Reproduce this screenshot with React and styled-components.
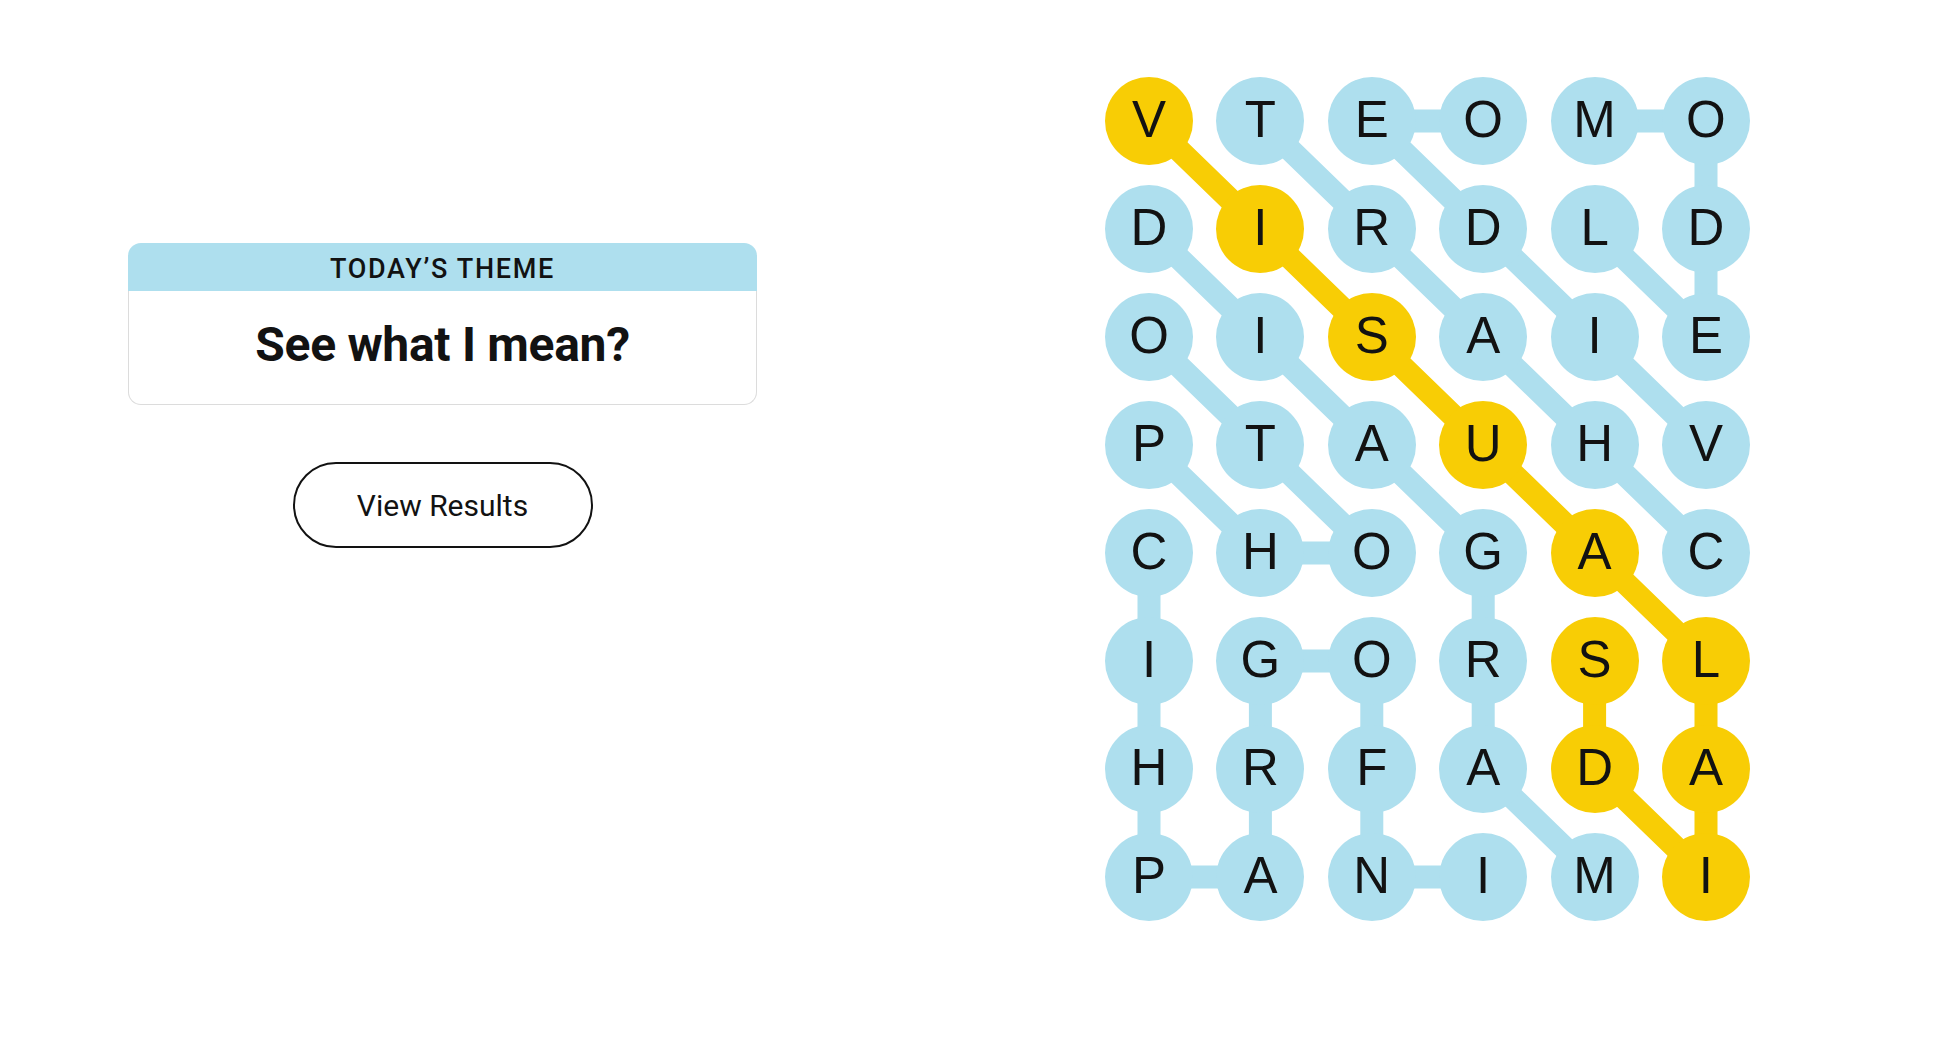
import React from 'react';
import styled, { createGlobalStyle } from 'styled-components';

const GlobalStyle = createGlobalStyle`
    body {
        margin: 0;
        background: #ffffff;
        font-family: "Liberation Sans", Arial, sans-serif;
        color: #121212;
    }
`;

const BLUE = '#aedfee';
const YELLOW = '#f8cd05';

const CIRCLE = 88;
const COL_GAP = 23.4;
const ROW_GAP = 20;
const STEP_X = CIRCLE + COL_GAP;
const STEP_Y = CIRCLE + ROW_GAP;

const letters = [
    'VTEOMO',
    'DIRDLD',
    'OISAIE',
    'PTAUHV',
    'CHOGAC',
    'IGORSL',
    'HRFADA',
    'PANIMI',
];

// spangram, in path order
const spangram = [[0, 0], [1, 1], [2, 2], [3, 3], [4, 4], [5, 5], [6, 5], [7, 5], [6, 4], [5, 4]];

const words = [
    // INFOGRAPHIC
    [[7, 3], [7, 2], [6, 2], [5, 2], [5, 1], [6, 1], [7, 1], [7, 0], [6, 0], [5, 0], [4, 0]],
    // PHOTO
    [[3, 0], [4, 1], [4, 2], [3, 1], [2, 0]],
    // DIAGRAM
    [[1, 0], [2, 1], [3, 2], [4, 3], [5, 3], [6, 3], [7, 4]],
    // VIDEO
    [[3, 5], [2, 4], [1, 3], [0, 2], [0, 3]],
    // CHART
    [[4, 5], [3, 4], [2, 3], [1, 2], [0, 1]],
    // MODEL
    [[0, 4], [0, 5], [1, 5], [2, 5], [1, 4]],
];

const isSpangram = (r, c) => spangram.some(([a, b]) => a === r && b === c);

const Page = styled.main`
    display: flex;
    align-items: flex-start;
    gap: 348px;
    padding: 77px 0 0 128px;
    height: 1056px;
    box-sizing: border-box;
`;

const LeftColumn = styled.section`
    width: 629px;
    padding-top: 166px;
    display: flex;
    flex-direction: column;
    align-items: center;
`;

const ThemeCard = styled.div`
    width: 100%;
    display: flex;
    flex-direction: column;
`;

const ThemeHeader = styled.div`
    height: 48px;
    box-sizing: border-box;
    padding-top: 4px;
    background: ${BLUE};
    border-radius: 13px 13px 0 0;
    display: flex;
    align-items: center;
    justify-content: center;
    font-family: Roboto, "Liberation Sans", sans-serif;
    font-weight: 500;
    font-size: 27px;
    letter-spacing: 1.7px;
    text-transform: uppercase;
    color: #121212;
`;

const ThemeBody = styled.div`
    height: 114px;
    box-sizing: border-box;
    padding-bottom: 7px;
    border: 1.5px solid #dcdcdc;
    border-top: none;
    border-radius: 0 0 13px 13px;
    display: flex;
    align-items: center;
    justify-content: center;
`;

const ThemeTitle = styled.h1`
    margin: 0;
    font-family: Roboto, "Liberation Sans", sans-serif;
    font-weight: 700;
    font-size: 48px;
    letter-spacing: -0.3px;
    color: #121212;
`;

const ResultsButton = styled.button`
    margin-top: 57px;
    width: 300px;
    height: 86px;
    border: 2px solid #121212;
    border-radius: 43px;
    background: #ffffff;
    font-family: Roboto, "Liberation Sans", sans-serif;
    font-size: 30px;
    color: #121212;
    cursor: pointer;
`;

const Board = styled.div`
    position: relative;
`;

const Links = styled.svg`
    position: absolute;
    left: 0;
    top: 0;
    overflow: visible;
`;

const Grid = styled.div`
    position: relative;
    display: grid;
    grid-template-columns: repeat(6, ${CIRCLE}px);
    grid-auto-rows: ${CIRCLE}px;
    column-gap: ${COL_GAP}px;
    row-gap: ${ROW_GAP}px;
`;

const Letter = styled.div`
    width: ${CIRCLE}px;
    height: ${CIRCLE}px;
    box-sizing: border-box;
    padding-bottom: 3px;
    border-radius: 50%;
    background: ${p => (p.$gold ? YELLOW : BLUE)};
    display: flex;
    align-items: center;
    justify-content: center;
    font-size: 51px;
    line-height: 1;
    color: #121212;
`;

const center = ([r, c]) => [CIRCLE / 2 + c * STEP_X, CIRCLE / 2 + r * STEP_Y];

const Path = ({ cells, color }) => {
    const points = cells.map(center).map(p => p.join(',')).join(' ');
    return <polyline points={points} fill="none" stroke={color} strokeWidth="23" strokeLinejoin="round" />;
};

const App = () => {
    const width = 6 * CIRCLE + 5 * COL_GAP;
    const height = 8 * CIRCLE + 7 * ROW_GAP;
    return (
        <>
            <GlobalStyle />
            <Page>
                <LeftColumn>
                    <ThemeCard>
                        <ThemeHeader>Today’s Theme</ThemeHeader>
                        <ThemeBody>
                            <ThemeTitle>See what I mean?</ThemeTitle>
                        </ThemeBody>
                    </ThemeCard>
                    <ResultsButton>View Results</ResultsButton>
                </LeftColumn>
                <Board>
                    <Links width={width} height={height}>
                        {words.map((w, i) => <Path key={i} cells={w} color={BLUE} />)}
                        <Path cells={spangram} color={YELLOW} />
                    </Links>
                    <Grid>
                        {letters.map((row, r) =>
                            row.split('').map((ch, c) => (
                                <Letter key={`${r}-${c}`} $gold={isSpangram(r, c)}>{ch}</Letter>
                            ))
                        )}
                    </Grid>
                </Board>
            </Page>
        </>
    );
};

export default App;
